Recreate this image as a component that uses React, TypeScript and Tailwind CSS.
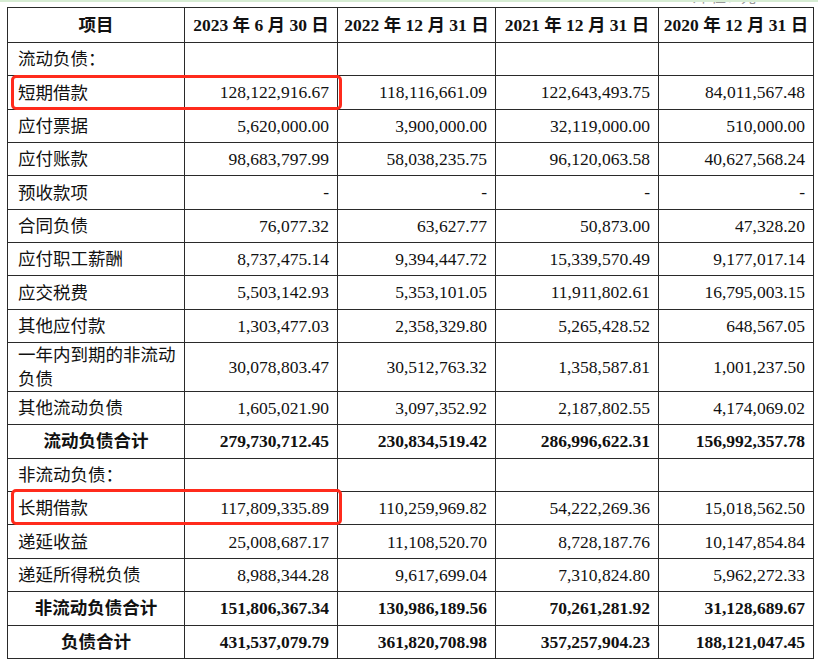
const rows: { label: string; values: string[]; kind?: 'section' | 'total' | 'double' }[] = [
  { label: '流动负债：', values: ['', '', '', ''], kind: 'section' },
  { label: '短期借款', values: ['128,122,916.67', '118,116,661.09', '122,643,493.75', '84,011,567.48'] },
  { label: '应付票据', values: ['5,620,000.00', '3,900,000.00', '32,119,000.00', '510,000.00'] },
  { label: '应付账款', values: ['98,683,797.99', '58,038,235.75', '96,120,063.58', '40,627,568.24'] },
  { label: '预收款项', values: ['-', '-', '-', '-'] },
  { label: '合同负债', values: ['76,077.32', '63,627.77', '50,873.00', '47,328.20'] },
  { label: '应付职工薪酬', values: ['8,737,475.14', '9,394,447.72', '15,339,570.49', '9,177,017.14'] },
  { label: '应交税费', values: ['5,503,142.93', '5,353,101.05', '11,911,802.61', '16,795,003.15'] },
  { label: '其他应付款', values: ['1,303,477.03', '2,358,329.80', '5,265,428.52', '648,567.05'] },
  { label: '一年内到期的非流动负债', values: ['30,078,803.47', '30,512,763.32', '1,358,587.81', '1,001,237.50'], kind: 'double' },
  { label: '其他流动负债', values: ['1,605,021.90', '3,097,352.92', '2,187,802.55', '4,174,069.02'] },
  { label: '流动负债合计', values: ['279,730,712.45', '230,834,519.42', '286,996,622.31', '156,992,357.78'], kind: 'total' },
  { label: '非流动负债：', values: ['', '', '', ''], kind: 'section' },
  { label: '长期借款', values: ['117,809,335.89', '110,259,969.82', '54,222,269.36', '15,018,562.50'] },
  { label: '递延收益', values: ['25,008,687.17', '11,108,520.70', '8,728,187.76', '10,147,854.84'] },
  { label: '递延所得税负债', values: ['8,988,344.28', '9,617,699.04', '7,310,824.80', '5,962,272.33'] },
  { label: '非流动负债合计', values: ['151,806,367.34', '130,986,189.56', '70,261,281.92', '31,128,689.67'], kind: 'total' },
  { label: '负债合计', values: ['431,537,079.79', '361,820,708.98', '357,257,904.23', '188,121,047.45'], kind: 'total' },
];

const headers = ['2023 年 6 月 30 日', '2022 年 12 月 31 日', '2021 年 12 月 31 日', '2020 年 12 月 31 日'];

export default function App() {
  return (
    <div
      className="w-[818px] h-[660px] overflow-hidden bg-white text-[#111]"
      style={{ fontFamily: "'Liberation Serif', 'Noto Sans CJK SC', serif" }}
    >
      <div className="h-[2px] bg-[#d6ecd3]" />
      {/* unit line above the table, cut off by the screenshot edge */}
      <div className="h-[5px] overflow-hidden flex justify-end pr-[62px]">
        <span className="mt-[-12px] text-[15px] leading-[15px] text-[#999]">（单位：元</span>
      </div>

      <div className="relative ml-[7px] w-[806px]">
        <table className="table-fixed border-collapse w-[806px] text-[17.5px]">
          <colgroup>
            <col className="w-[177px]" />
            <col className="w-[153px]" />
            <col className="w-[158px]" />
            <col className="w-[163px]" />
            <col className="w-[155px]" />
          </colgroup>
          <thead>
            <tr className="h-[35px]">
              <th className="border border-[#2a2a2a] font-bold text-center p-0">项目</th>
              {headers.map((h) => (
                <th key={h} className="border border-[#2a2a2a] font-bold text-center p-0 whitespace-nowrap">
                  {h}
                </th>
              ))}
            </tr>
          </thead>
          <tbody>
            {rows.map((r) => (
              <tr key={r.label} className={r.kind === 'double' ? 'h-[47px]' : 'h-[33.35px]'}>
                <td
                  className={
                    r.kind === 'total'
                      ? 'border border-[#2a2a2a] p-0 text-center font-bold'
                      : 'border border-[#2a2a2a] p-0 pl-[10px] text-left leading-[24px]'
                  }
                >
                  {r.kind === 'double' ? (
                    <>
                      一年内到期的非流动
                      <br />
                      负债
                    </>
                  ) : (
                    r.label
                  )}
                </td>
                {r.values.map((v, i) => (
                  <td
                    key={i}
                    className={
                      r.kind === 'total'
                        ? 'border border-[#2a2a2a] p-0 pr-[8px] text-right font-bold whitespace-nowrap'
                        : 'border border-[#2a2a2a] p-0 pr-[8px] text-right whitespace-nowrap'
                    }
                  >
                    {v}
                  </td>
                ))}
              </tr>
            ))}
          </tbody>
        </table>

        {/* red highlight boxes */}
        <div className="absolute left-[4px] top-[68px] w-[331px] h-[35px] border-[3px] border-[#ff2b1c] rounded-[5px]" />
        <div className="absolute left-[4px] top-[482px] w-[331px] h-[36px] border-[3px] border-[#ff2b1c] rounded-[5px]" />
      </div>
    </div>
  );
}
